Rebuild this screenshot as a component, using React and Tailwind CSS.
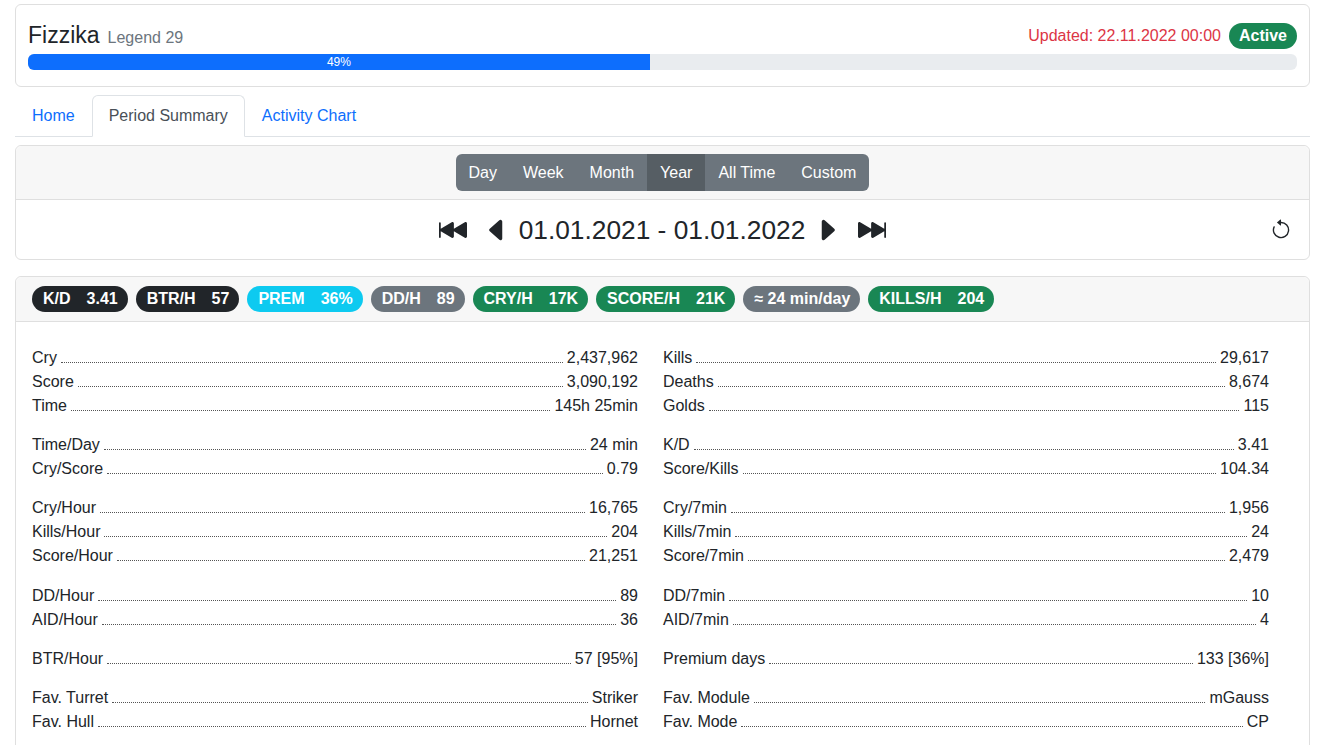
import React, { useState } from "react";

const stats = [
  [
    [["Cry", "2,437,962"], ["Score", "3,090,192"], ["Time", "145h 25min"]],
    [["Kills", "29,617"], ["Deaths", "8,674"], ["Golds", "115"]],
  ],
  [
    [["Time/Day", "24 min"], ["Cry/Score", "0.79"]],
    [["K/D", "3.41"], ["Score/Kills", "104.34"]],
  ],
  [
    [["Cry/Hour", "16,765"], ["Kills/Hour", "204"], ["Score/Hour", "21,251"]],
    [["Cry/7min", "1,956"], ["Kills/7min", "24"], ["Score/7min", "2,479"]],
  ],
  [
    [["DD/Hour", "89"], ["AID/Hour", "36"]],
    [["DD/7min", "10"], ["AID/7min", "4"]],
  ],
  [[["BTR/Hour", "57 [95%]"]], [["Premium days", "133 [36%]"]]],
  [
    [["Fav. Turret", "Striker"], ["Fav. Hull", "Hornet"]],
    [["Fav. Module", "mGauss"], ["Fav. Mode", "CP"]],
  ],
];

const badges = [
  { label: "K/D", value: "3.41", cls: "bg-[#212529]" },
  { label: "BTR/H", value: "57", cls: "bg-[#212529]" },
  { label: "PREM", value: "36%", cls: "bg-[#0dcaf0]" },
  { label: "DD/H", value: "89", cls: "bg-[#6c757d]" },
  { label: "CRY/H", value: "17K", cls: "bg-[#198754]" },
  { label: "SCORE/H", value: "21K", cls: "bg-[#198754]" },
  { label: "≈ 24 min/day", value: null, cls: "bg-[#6c757d]" },
  { label: "KILLS/H", value: "204", cls: "bg-[#198754]" },
];

const periods = ["Day", "Week", "Month", "Year", "All Time", "Custom"];

const SkipBack = () => (
  <svg width="28" height="28" viewBox="0 0 16 16" fill="currentColor">
    <path d="M.5 3.5A.5.5 0 0 0 0 4v8a.5.5 0 0 0 1 0V8.753l6.267 3.636c.54.313 1.233-.066 1.233-.697v-2.94l6.267 3.636c.54.314 1.233-.065 1.233-.696V4.308c0-.63-.693-1.01-1.233-.696L8.5 7.248v-2.94c0-.63-.692-1.01-1.233-.696L1 7.248V4a.5.5 0 0 0-.5-.5z" />
  </svg>
);

const SkipFwd = () => (
  <svg width="28" height="28" viewBox="0 0 16 16" fill="currentColor">
    <path d="M15.5 3.5a.5.5 0 0 1 .5.5v8a.5.5 0 0 1-1 0V8.753l-6.267 3.636c-.54.313-1.233-.066-1.233-.697v-2.94l-6.267 3.636C.693 12.703 0 12.324 0 11.693V4.308c0-.63.693-1.01 1.233-.696L7.5 7.248v-2.94c0-.63.693-1.01 1.233-.696L15 7.248V4a.5.5 0 0 1 .5-.5z" />
  </svg>
);

const CaretLeft = () => (
  <svg width="28" height="28" viewBox="0 0 16 16" fill="currentColor">
    <path d="m3.86 8.753 5.482 4.796c.646.566 1.658.106 1.658-.753V3.204a1 1 0 0 0-1.659-.753l-5.48 4.796a1 1 0 0 0 0 1.506z" />
  </svg>
);

const CaretRight = () => (
  <svg width="28" height="28" viewBox="0 0 16 16" fill="currentColor">
    <path d="m12.14 8.753-5.482 4.796c-.646.566-1.658.106-1.658-.753V3.204a1 1 0 0 1 1.659-.753l5.48 4.796a1 1 0 0 1 0 1.506z" />
  </svg>
);

const Reset = () => (
  <svg width="22" height="22" viewBox="0 0 16 16" fill="currentColor">
    <path fillRule="evenodd" d="M8 3a5 5 0 1 1-4.546 2.914.5.5 0 0 0-.908-.417A6 6 0 1 0 8 2v1z" />
    <path d="M8 4.466V.534a.25.25 0 0 0-.41-.192L5.23 2.308a.25.25 0 0 0 0 .384l2.36 1.966A.25.25 0 0 0 8 4.466z" />
  </svg>
);

const StatRow = ({ label, value }) => (
  <div className="flex items-baseline h-6 leading-6">
    <span>{label}</span>
    <span className="flex-1 mx-1 border-b border-dotted border-[#555]" />
    <span>{value}</span>
  </div>
);

const StatColumn = ({ side }) => (
  <div>
    {stats.map((group, gi) => (
      <div key={gi} className={gi > 0 ? "mt-[15.2px]" : ""}>
        {group[side].map(([l, v]) => (
          <StatRow key={l} label={l} value={v} />
        ))}
      </div>
    ))}
  </div>
);

export default function App() {
  const [period, setPeriod] = useState("Year");
  const [tab, setTab] = useState("Period Summary");

  return (
    <div className="min-h-screen bg-white pl-[15px] pr-[7px] pt-[4px] pb-6 text-[16px] text-[#212529] font-['Liberation_Sans',Arial,sans-serif]">
      {/* Header card */}
      <div className="border border-[#dfdfdf] rounded-md px-[12px] pt-[16px] pb-[16px]">
        <div className="flex items-center justify-between h-[29px]">
          <div className="flex items-baseline gap-2">
            <span className="text-[23px]">Fizzika</span>
            <span className="text-[#6c757d]">Legend 29</span>
          </div>
          <div className="flex items-center gap-2">
            <span className="text-[#dc3545]">Updated: 22.11.2022 00:00</span>
            <span className="bg-[#198754] text-white font-bold rounded-full px-[10px] h-[26px] leading-[26px]">
              Active
            </span>
          </div>
        </div>
        <div className="mt-[4px] h-4 bg-[#e9ecef] rounded-md overflow-hidden flex">
          <div className="bg-[#0d6efd] w-[49%] text-white text-[12px] leading-4 text-center">
            49%
          </div>
        </div>
      </div>

      {/* Tabs */}
      <div className="mt-2 flex border-b border-[#dee2e6]">
        {["Home", "Period Summary", "Activity Chart"].map((t) => (
          <button
            key={t}
            onClick={() => setTab(t)}
            className={
              "px-4 py-2 leading-6 border rounded-t-md -mb-px " +
              (tab === t
                ? "bg-white border-[#dee2e6] border-b-white text-[#495057]"
                : "border-transparent text-[#0d6efd]")
            }
          >
            {t}
          </button>
        ))}
      </div>

      {/* Period card */}
      <div className="mt-2 border border-[#dfdfdf] rounded-md">
        <div className="bg-[#f7f7f7] border-b border-[#dfdfdf] rounded-t-md flex justify-center py-[8px]">
          <div className="flex rounded-md overflow-hidden">
            {periods.map((p) => (
              <button
                key={p}
                onClick={() => setPeriod(p)}
                className={
                  "px-[13px] h-[37px] leading-6 text-white " +
                  (period === p ? "bg-[#565e64]" : "bg-[#6c757d]")
                }
              >
                {p}
              </button>
            ))}
          </div>
        </div>
        <div className="grid grid-cols-[1fr_auto_1fr] items-center h-[59px] px-4">
          <div />
          <div className="flex items-center">
            <span className="mr-[16px]"><SkipBack /></span>
            <span className="mr-[4px]"><CaretLeft /></span>
            <span className="text-[26.3px] leading-8 px-[4px]">01.01.2021 - 01.01.2022</span>
            <span className="ml-[4px]"><CaretRight /></span>
            <span className="ml-[17px]"><SkipFwd /></span>
          </div>
          <div className="justify-self-end flex items-center pr-[1px]">
            <Reset />
          </div>
        </div>
      </div>

      {/* Stats card */}
      <div className="mt-4 border border-[#dfdfdf] rounded-md">
        <div className="bg-[#f7f7f7] border-b border-[#dfdfdf] rounded-t-md px-4 py-[9px] flex gap-2">
          {badges.map((b) => (
            <span
              key={b.label}
              className={
                "text-white font-bold rounded-full h-[26px] leading-[26px] pl-[11px] pr-[10px] flex gap-4 " +
                b.cls
              }
            >
              <span>{b.label}</span>
              {b.value && <span>{b.value}</span>}
            </span>
          ))}
        </div>
        <div className="pl-4 pr-[40px] pt-6 pb-6 grid grid-cols-2 gap-x-[25px]">
          <StatColumn side={0} />
          <StatColumn side={1} />
        </div>
      </div>
    </div>
  );
}
